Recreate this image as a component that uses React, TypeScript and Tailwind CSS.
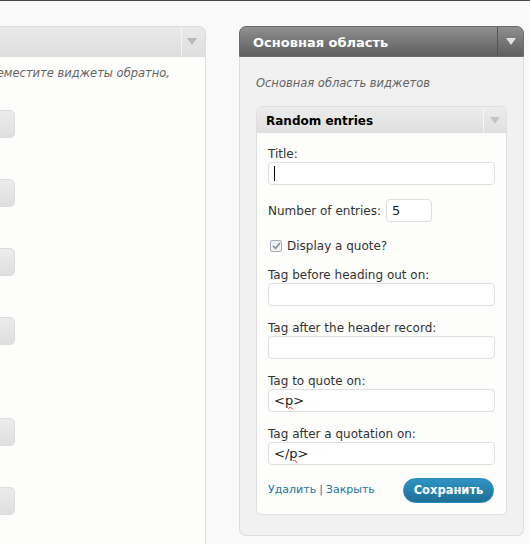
import { ReactNode } from "react";

const font = { fontFamily: '"DejaVu Sans", Verdana, sans-serif' };

function Arrow({ color }: { color: string }) {
  return (
    <svg width="10" height="7" viewBox="0 0 10 7">
      <polygon points="0,0 10,0 5,7" fill={color} />
    </svg>
  );
}

function Field({ label, children, first }: { label: string; children?: ReactNode; first?: boolean }) {
  return (
    <div className={first ? "" : "mt-[14px]"}>
      <div className="h-4 text-[12px] leading-4 text-[#333]">{label}</div>
      <div className="flex h-[23px] w-full items-center rounded-[4px] border border-[#dfdfdf] bg-white pl-[5px] text-[13px] text-[#222]">
        {children}
      </div>
    </div>
  );
}

// right ends of the available widget items, left column
const items = ["mt-[28px]", "mt-[41px]", "mt-[41px]", "mt-[41px]", "mt-[73px]", "mt-[41px]"];

export default function App() {
  return (
    <div style={font} className="h-[544px] w-[530px] overflow-hidden border-t border-[#464646] bg-[#f8f9f8]">
      <div className="flex pt-[25px]">
        {/* available widgets column, cut off at the left */}
        <div className="h-[600px] w-[206px] shrink-0 overflow-hidden">
          <div className="ml-[-194px] w-[400px]">
            <div className="flex h-[31px] rounded-tr-[7px] border border-[#dcdcdc] bg-gradient-to-b from-[#e9e9e9] to-[#dedede]">
              <div className="flex-1" />
              <div className="flex w-[24px] items-center justify-center border-l border-[#f4f4f4] pr-[3px]">
                <Arrow color="#b8b8b8" />
              </div>
            </div>
            <div className="h-[600px] border-x border-[#dfdfdf] bg-[#fdfdfc]">
              <p className="whitespace-nowrap pr-[35px] pt-[8px] text-right text-[11.5px] italic leading-[17px] text-[#666]">
                Чтобы отключить их, переместите виджеты обратно,
              </p>
              {items.map((m, i) => (
                <div
                  key={i}
                  className={`${m} ml-[-2px] h-[28px] w-[210px] rounded-[5px] border border-[#dcdcdc] bg-gradient-to-b from-[#ececec] to-[#dfdfdf]`}
                />
              ))}
            </div>
          </div>
        </div>

        {/* sidebar */}
        <div className="ml-[33px] w-[285px] shrink-0">
          <div className="flex h-[31px] rounded-t-[7px] border border-[#6a6a6a] bg-gradient-to-b from-[#909090] to-[#5e5e5e]">
            <div className="flex flex-1 items-center pl-[13px] pt-[3px] text-[13px] font-bold text-white">
              Основная область
            </div>
            <div className="flex w-[26px] items-center justify-center border-l border-[#555]">
              <Arrow color="#e2e2e2" />
            </div>
          </div>
          <div className="rounded-b-[7px] border-x border-b border-[#dcdcdc] bg-[#f0f1f0] px-[16px] pb-[20px]">
            <p className="pt-[18px] text-[11.5px] italic leading-4 text-[#666]">Основная область виджетов</p>

            <div className="mt-[15px] overflow-hidden rounded-[6px] border border-[#dfdfdf] bg-[#fdfdfc]">
              <div className="flex h-[26px] bg-gradient-to-b from-[#ececec] to-[#dfdfdf]">
                <div className="flex flex-1 items-center pl-[9px] pt-[2px] text-[12px] font-bold text-black">
                  Random entries
                </div>
                <div className="flex w-[23px] items-center justify-center border-l border-[#f5f5f5]">
                  <Arrow color="#c4c4c4" />
                </div>
              </div>

              <div className="px-[11px] pb-[11px] pt-[13px]">
                <Field label="Title:" first>
                  <span className="h-[15px] w-px bg-black" />
                </Field>

                <div className="mt-[14px] flex items-center gap-[5px]">
                  <span className="text-[12px] text-[#333]">Number of entries:</span>
                  <div className="flex h-[23px] w-[46px] items-center rounded-[4px] border border-[#dfdfdf] bg-white pl-[5px] text-[13px] text-[#222]">
                    5
                  </div>
                </div>

                <div className="mt-[16px] flex h-4 items-center gap-[5px]">
                  <span className="ml-[2px] flex h-[12px] w-[12px] items-center justify-center rounded-[2px] border border-[#a9b2bb] bg-[#eef0f2]">
                    <svg width="9" height="8" viewBox="0 0 9 8">
                      <path d="M1 4 L3.5 6.5 L8 1" fill="none" stroke="#7d8a96" strokeWidth="1.5" />
                    </svg>
                  </span>
                  <span className="text-[12px] text-[#333]">Display a quote?</span>
                </div>

                <div className="mt-[13px]">
                  <Field label="Tag before heading out on:" first />
                </div>
                <Field label="Tag after the header record:" />
                <Field label="Tag to quote on:">
                  <span>
                    &lt;<span className="underline decoration-red-500 decoration-wavy decoration-1">p</span>&gt;
                  </span>
                </Field>
                <Field label="Tag after a quotation on:">
                  <span>
                    &lt;/<span className="underline decoration-red-500 decoration-wavy decoration-1">p</span>&gt;
                  </span>
                </Field>

                <div className="mt-[13px] flex items-center justify-between">
                  <div className="text-[11px] text-[#21759b]">
                    <span>Удалить</span>
                    <span className="mx-[3px]">|</span>
                    <span>Закрыть</span>
                  </div>
                  <button className="mr-px h-[25px] w-[91px] rounded-full border border-[#298cba] bg-gradient-to-b from-[#2f93c4] to-[#1f6f95] text-[11.5px] font-bold text-white">
                    Сохранить
                  </button>
                </div>
              </div>
            </div>
          </div>
        </div>
      </div>
    </div>
  );
}
